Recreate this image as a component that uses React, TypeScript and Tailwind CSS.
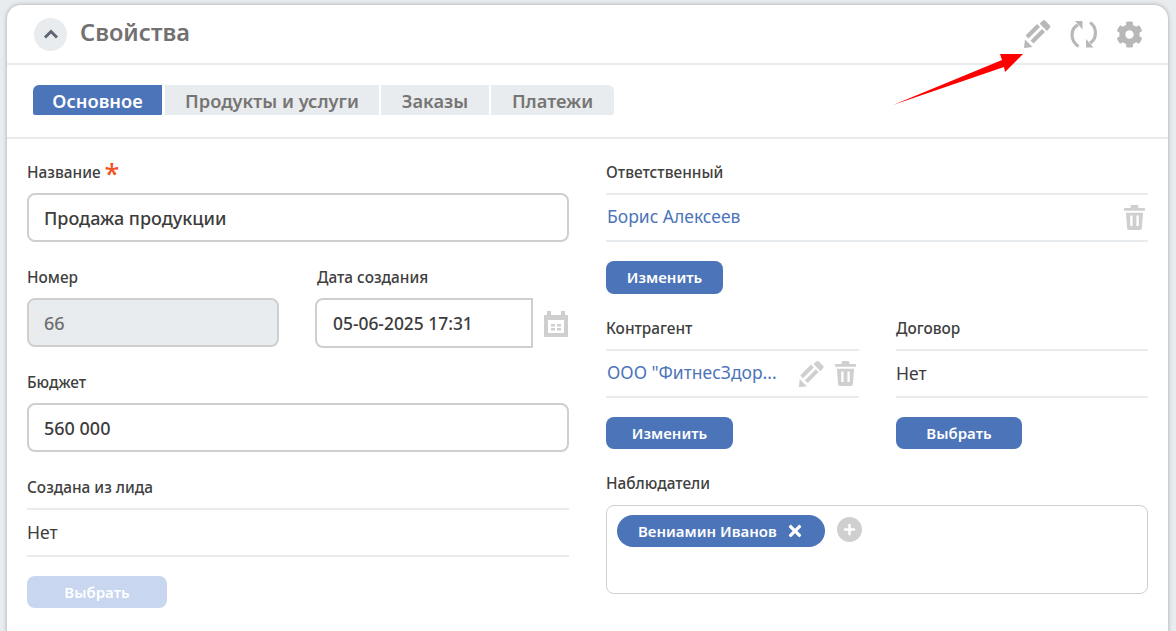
import { FC, ReactNode } from "react";
import { FaCog, FaPlus, FaTimes } from "react-icons/fa";

const PencilIcon: FC<{ className?: string }> = ({ className }) => (
  <svg viewBox="0 0 36 36" className={className} fill="currentColor">
    <path d="M4 32l1-8.500 7.500 7.500z" />
    <path d="M5.500 19.500L17 8l3 3L8.500 22.500z" />
    <path d="M10.500 24.500L22 13l3 3-11.500 11.500z" />
    <path d="M19.500 7.500l3.500-3a1.500 1.500 0 0 1 2 0l5 5a1.500 1.500 0 0 1 0 2l-3 3.500z" />
  </svg>
);

const TrashIcon: FC<{ className?: string }> = ({ className }) => (
  <svg viewBox="0 0 22 26" className={className} fill="currentColor">
    <path d="M8 0h6a1 1 0 0 1 1 1v2h6a1 1 0 0 1 1 1v2H0V4a1 1 0 0 1 1-1h6V1a1 1 0 0 1 1-1z" />
    <path
      fillRule="evenodd"
      d="M2 8h18l-1.300 16.200A2 2 0 0 1 16.700 26H5.300a2 2 0 0 1-2-1.800zM6.500 11v11H9V11zM13 11v11h2.500V11z"
    />
  </svg>
);

const RefreshIcon: FC<{ className?: string }> = ({ className }) => (
  <svg viewBox="0 0 36 36" className={className} fill="none">
    <path d="M12 9C4.500 12.500 3.500 24 12.500 30.500" stroke="currentColor" strokeWidth="3.200" />
    <path d="M24 6.500C31.500 11 31 23 24 27" stroke="currentColor" strokeWidth="3.200" />
    <path d="M9 5h7.500v8.500z" fill="currentColor" />
    <path d="M27.500 31.500H20V23z" fill="currentColor" />
  </svg>
);

const CalendarIcon: FC<{ className?: string }> = ({ className }) => (
  <svg viewBox="0 0 36 36" className={className} fill="currentColor">
    <path
      fillRule="evenodd"
      d="M6 10h3V6h4v4h10V6h4v4h3v22H6zM10 15v13h16V15zM13 19h4v2.500h-4zM19 19h4v2.500h-4zM13 23h4v2.500h-4zM19 23h4v2.500h-4z"
    />
  </svg>
);

const Label: FC<{ children: ReactNode }> = ({ children }) => (
  <div className="mb-[10px] flex h-[22px] items-center pt-[2px] text-[15.400px] font-medium text-[#404040]">
    {children}
  </div>
);

const TextInput: FC<{ value: string; disabled?: boolean }> = ({ value, disabled }) => (
  <div
    className={`flex h-[49px] items-center rounded-[8px] border-2 border-[#cfcfcf] px-[15px] pt-[2px] text-[18px] font-medium ${
      disabled ? "bg-[#e8ecef] text-[#6f6f6f]" : "bg-white text-[#3c3c3c]"
    }`}
  >
    {value}
  </div>
);

const ValueRow: FC<{ children: ReactNode }> = ({ children }) => (
  <div className="flex h-[49px] items-center border-y-2 border-[#e8ecef] text-[17.500px]">{children}</div>
);

const Button: FC<{ width: string; height?: string; disabled?: boolean; children: ReactNode }> = ({
  width,
  height = "h-[32px]",
  disabled,
  children,
}) => (
  <button
    className={`flex items-center justify-center rounded-[8px] text-[15px] font-semibold text-white ${width} ${height} ${
      disabled ? "bg-[#c8d6f0]" : "bg-[#4c74b9]"
    }`}
  >
    {children}
  </button>
);

const tabs = [
  { name: "Основное", width: "w-[129px]", className: "bg-[#4c74b9] text-white rounded-tl-[6px] rounded-bl-[2px] rounded-br-[1px]" },
  { name: "Продукты и услуги", width: "w-[214px]", className: "bg-[#e8ecef] text-[#777573] ml-[3px]" },
  { name: "Заказы", width: "w-[108px]", className: "bg-[#e8ecef] text-[#777573] ml-[2px]" },
  { name: "Платежи", width: "w-[123px]", className: "bg-[#e8ecef] text-[#777573] ml-[2px] rounded-tr-[6px] rounded-br-[2px]" },
];

export default function App() {
  return (
    <div
      className="relative h-[631px] overflow-hidden bg-[#e8ecef] pl-[7px] pr-[8px] pt-[5px]"
      style={{ fontFamily: '"Noto Sans", sans-serif' }}
    >
      <div className="h-[640px] rounded-t-[14px] bg-white shadow-[0_0_4px_rgba(0,0,0,0.3)]">
        <div className="flex h-[60px] items-center border-b-2 border-[#e8ecef] pl-[27px] pr-[25px]">
          <div className="flex h-[33px] w-[33px] items-center justify-center rounded-full bg-[#e8ecef] text-[#5f6770]">
            <svg viewBox="0 0 16 16" className="h-[16px] w-[16px]" fill="none">
              <polyline points="2,11.500 8,5.500 14,11.500" stroke="currentColor" strokeWidth="3" />
            </svg>
          </div>
          <h1 className="mb-[2px] ml-[13px] text-[23.600px] font-semibold text-[#727070]">Свойства</h1>
          <div className="ml-auto flex items-center text-[#b8b8b8]">
            <PencilIcon className="h-[36px] w-[36px]" />
            <RefreshIcon className="ml-[10px] h-[36px] w-[36px]" />
            <FaCog className="ml-[14px] h-[27px] w-[27px]" />
          </div>
        </div>

        <div className="flex h-[74px] border-b-2 border-[#e8ecef] pl-[26px] pt-[20px]">
          {tabs.map((tab) => (
            <div
              key={tab.name}
              className={`flex h-[30px] items-center justify-center pt-[2px] text-[18.300px] font-semibold ${tab.width} ${tab.className}`}
            >
              {tab.name}
            </div>
          ))}
        </div>

        <div className="grid grid-cols-2 gap-x-[37px] px-[20px] pt-[22px]">
          <div>
            <Label>
              Название
              <span className="ml-[4px] h-[20px] self-start text-[27px] leading-[22px] text-[#f4511e]">*</span>
            </Label>
            <TextInput value="Продажа продукции" />

            <div className="mt-[24px] flex">
              <div className="w-[252px] shrink-0">
                <Label>Номер</Label>
                <TextInput value="66" disabled />
              </div>
              <div className="ml-[36px] shrink-0">
                <div className="pl-[2px]">
                  <Label>Дата создания</Label>
                </div>
                <div className="flex items-center">
                  <div className="flex h-[50px] w-[218px] shrink-0 items-center rounded-l-[8px] border-2 border-[#cfcfcf] px-[16px] pt-[1px] text-[17.400px] font-medium text-[#3c3c3c]">
                    05-06-2025 17:31
                  </div>
                  <CalendarIcon className="ml-[5px] h-[36px] w-[36px] shrink-0 text-[#cfcfcf]" />
                </div>
              </div>
            </div>

            <div className="mt-[23px]">
              <Label>Бюджет</Label>
              <TextInput value="560 000" />
            </div>

            <div className="mt-[24px]">
              <Label>Создана из лида</Label>
              <ValueRow>
                <span className="text-[#3c3c3c]">Нет</span>
              </ValueRow>
              <div className="mt-[19px]">
                <Button width="w-[140px]" disabled>
                  Выбрать
                </Button>
              </div>
            </div>
          </div>

          <div>
            <Label>Ответственный</Label>
            <ValueRow>
              <span className="pb-[2px] pl-[1px] text-[#4c74b9]">Борис Алексеев</span>
              <TrashIcon className="ml-auto mr-[3px] h-[25px] w-[21px] text-[#cfcfcf]" />
            </ValueRow>
            <div className="mt-[19px]">
              <Button width="w-[117px]" height="h-[33px]">
                Изменить
              </Button>
            </div>

            <div className="mt-[23px] grid grid-cols-[253px_252px] gap-x-[37px]">
              <div>
                <Label>Контрагент</Label>
                <ValueRow>
                  <span className="whitespace-nowrap pb-[2px] pl-[1px] text-[#4c74b9]">ООО "ФитнесЗдор...</span>
                  <PencilIcon className="ml-auto h-[34px] w-[34px] text-[#cfcfcf]" />
                  <TrashIcon className="ml-[6px] mr-[3px] h-[25px] w-[21px] text-[#cfcfcf]" />
                </ValueRow>
                <div className="mt-[19px]">
                  <Button width="w-[127px]">Изменить</Button>
                </div>
              </div>
              <div>
                <Label>Договор</Label>
                <ValueRow>
                  <span className="text-[#3c3c3c]">Нет</span>
                </ValueRow>
                <div className="mt-[19px]">
                  <Button width="w-[126px]">Выбрать</Button>
                </div>
              </div>
            </div>

            <div className="mt-[23px]">
              <Label>Наблюдатели</Label>
              <div className="mt-[11px] flex h-[89px] items-start rounded-[8px] border border-[#cfcfcf] pl-[10px] pt-[9px]">
                <div className="flex h-[32px] w-[208px] items-center rounded-full bg-[#4c74b9] pl-[21px] text-[15px] font-semibold text-white">
                  Вениамин Иванов
                  <FaTimes className="ml-[9px] h-[18px] w-[18px]" />
                </div>
                <div className="ml-[12px] mt-[2px] flex h-[25px] w-[25px] items-center justify-center rounded-full bg-[#cfcfcf] text-white">
                  <FaPlus className="h-[13px] w-[13px]" />
                </div>
              </div>
            </div>
          </div>
        </div>
      </div>

      <svg className="absolute left-[890px] top-[50px] h-[60px] w-[140px]" viewBox="890 50 140 60">
        <path d="M893 105L1002 60 1000 54 1023 54 1005 72 1004 67z" fill="#ff0000" />
      </svg>
    </div>
  );
}
